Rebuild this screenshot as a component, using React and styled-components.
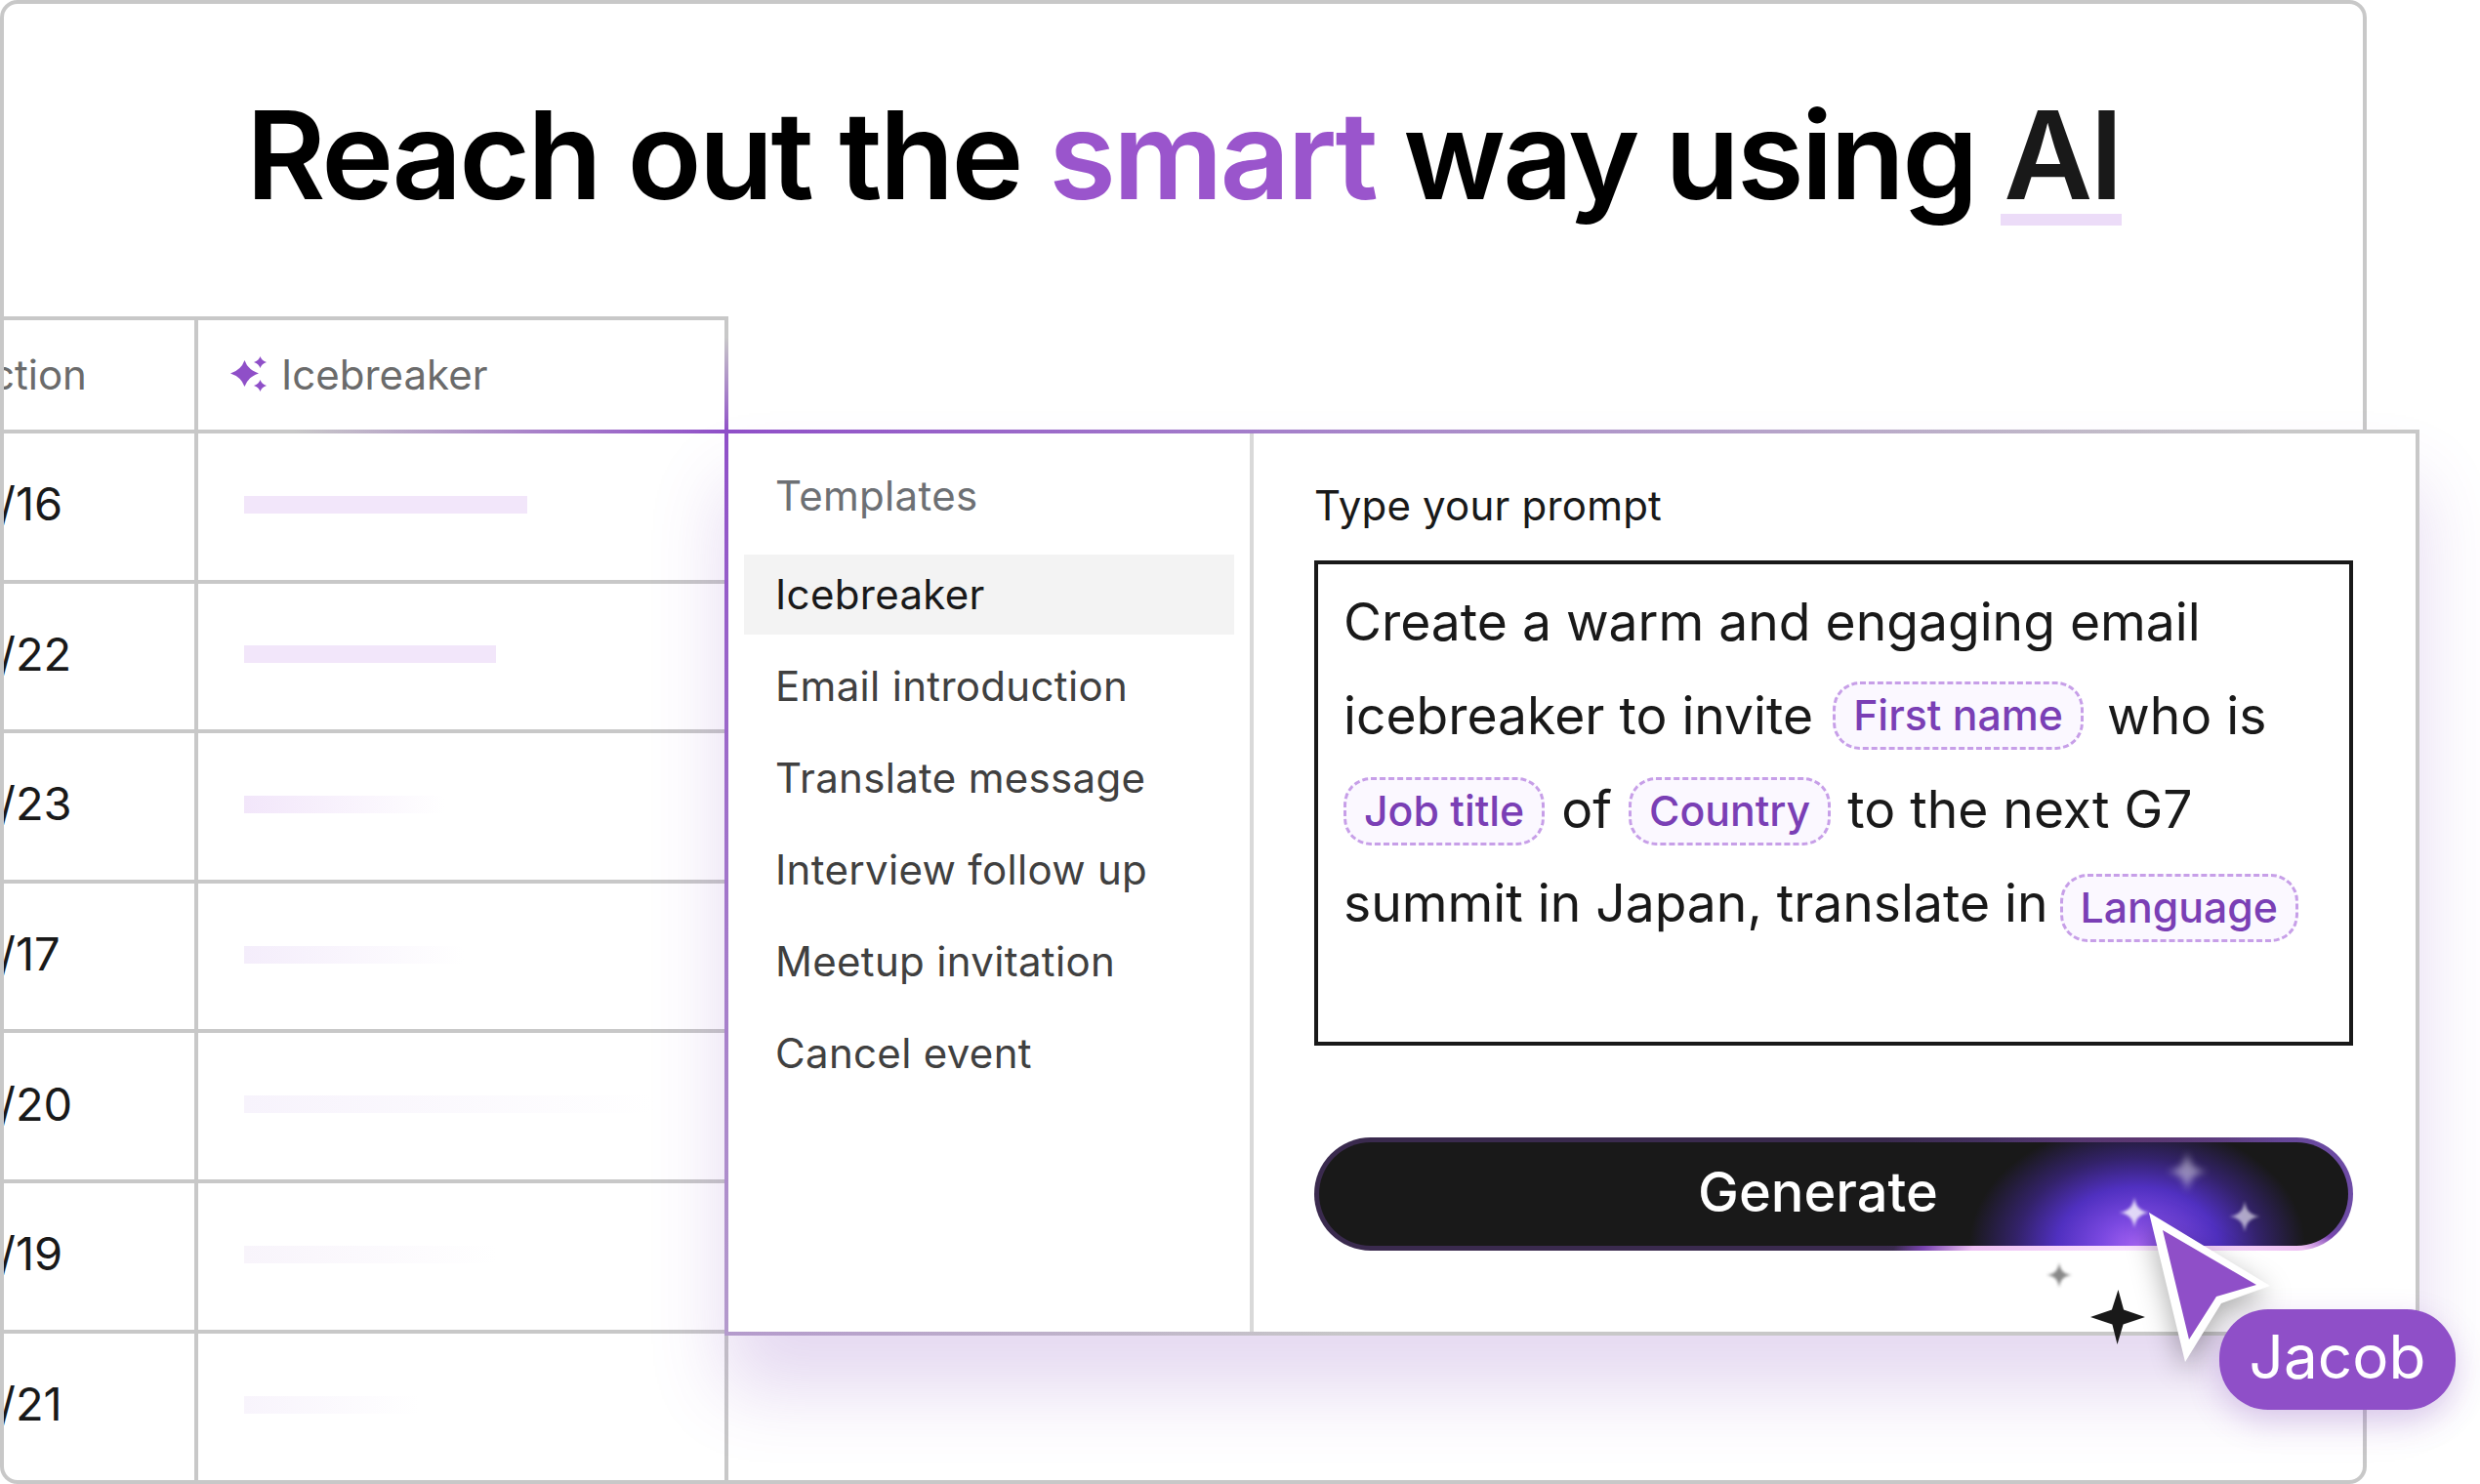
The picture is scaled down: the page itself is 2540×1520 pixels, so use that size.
import { createGlobalStyle, styled } from "styled-components";

const rows = [
  { date: "/16", width: 290, from: "#f2e6fa", to: "#f2e6fa" },
  { date: "/22", width: 258, from: "#f2e6fa", to: "#f2e6fa" },
  { date: "/23", width: 205, from: "#f2e6fa", to: "#ffffff" },
  { date: "/17", width: 225, from: "#f4edfb", to: "#ffffff" },
  { date: "/20", width: 420, from: "#f7f3fc", to: "#ffffff" },
  { date: "/19", width: 260, from: "#f8f4fb", to: "#ffffff" },
  { date: "/21", width: 180, from: "#f8f4fc", to: "#ffffff" },
];

const templates = [
  "Icebreaker",
  "Email introduction",
  "Translate message",
  "Interview follow up",
  "Meetup invitation",
  "Cancel event",
];

const STAR = "M12 0C12.8 7.5 16.5 11.2 24 12C16.5 12.8 12.8 16.5 12 24C11.2 16.5 7.5 12.8 0 12C7.5 11.2 11.2 7.5 12 0Z";

const App = () => {
  return (
    <Page>
      <GlobalStyle />
      <Card>
        <Title>
          Reach out the <Smart>smart</Smart> way using <Marked>AI</Marked>
        </Title>
        <Table>
          <HeadCell>
            <ClippedLabel>ction</ClippedLabel>
          </HeadCell>
          <AiHeadCell>
            <svg width="38" height="38" viewBox="0 0 38 38" fill="#8f4fc8">
              <path d="M14.5 5Q18 15 29 18.5Q18 22 14.5 32Q11 22 0 18.5Q11 15 14.5 5Z" />
              <path d="M30.5 1Q32 5.5 37 7Q32 8.500 30.5 13Q29 8.500 24 7Q29 5.500 30.5 1Z" />
              <path d="M30.500 25Q32 29.500 37 31Q32 32.500 30.500 37Q29 32.500 24 31Q29 29.500 30.500 25Z" />
            </svg>
            Icebreaker
          </AiHeadCell>
          {rows.map((row, i) => (
            <Row key={row.date} $last={i === rows.length - 1}>
              <DateCell>
                <ClippedDate>{row.date}</ClippedDate>
              </DateCell>
              <BarCell>
                <Bar $width={row.width} $from={row.from} $to={row.to} />
              </BarCell>
            </Row>
          ))}
        </Table>
      </Card>

      <PromptPanel>
        <Menu>
          <MenuTitle>Templates</MenuTitle>
          <MenuList>
            {templates.map((name, i) => (
              <MenuItem key={name} $active={i === 0}>
                {name}
              </MenuItem>
            ))}
          </MenuList>
        </Menu>
        <Editor>
          <EditorLabel>Type your prompt</EditorLabel>
          <PromptBox>
            Create a warm and engaging email
            <br />
            icebreaker to invite <Chip $top={13} $left={5} $right={9}>First name</Chip> who is
            <br />
            <Chip $top={15} $left={0} $right={2}>Job title</Chip> of <Chip $top={15} $left={2} $right={2}>Country</Chip> to the next G7
            <br />
            summit in Japan, translate in<Chip $top={18} $left={12} $right={0}>Language</Chip>
          </PromptBox>
          <GenerateButton>Generate</GenerateButton>
        </Editor>
      </PromptPanel>

      <Star $x={2219} $y={1179} $size={42} $blur={3.5} $color="rgba(255,255,255,0.45)" viewBox="0 0 24 24"><path d={STAR} /></Star>
      <Star $x={2170} $y={1226} $size={32} $blur={1.8} $color="rgba(255,255,255,0.8)" viewBox="0 0 24 24"><path d={STAR} /></Star>
      <Star $x={2283} $y={1230} $size={32} $blur={1.8} $color="rgba(255,255,255,0.6)" viewBox="0 0 24 24"><path d={STAR} /></Star>
      <Star $x={2096} $y={1293} $size={26} $blur={1.4} $color="rgba(40,40,40,0.55)" viewBox="0 0 24 24"><path d={STAR} /></Star>
      <Star $x={2141} $y={1321} $size={56} $blur={0} $color="#191919" viewBox="0 0 24 24">
        <path d="M12.2 0L14.6 8.8L24 12L14.4 15.2L11.8 24L9.6 15.2L0 12L9.4 8.8Z" />
      </Star>

      <Pointer viewBox="0 0 140 170" width="140" height="170">
        <path d="M11 12L135 87L85 105L48 165Z" fill="#ffffff" />
        <path d="M25 30L121 86L80 98L52 142Z" fill="#8f4fc8" />
      </Pointer>
      <NameTag>Jacob</NameTag>
    </Page>
  );
};

export default App;

const GlobalStyle = createGlobalStyle`
  * {
    box-sizing: border-box;
  }
  html, body {
    margin: 0;
    padding: 0;
    background: #fff;
  }
  body {
    font-family: "Inter", "Liberation Sans", sans-serif;
  }
`;

const Page = styled.div`
  position: relative;
  width: 2540px;
  height: 1520px;
  overflow: hidden;
  background: #fff;
  color: #191919;
`;

const Card = styled.div`
  display: flex;
  flex-direction: column;
  width: 2424px;
  height: 1520px;
  border: 4px solid #c8c8c8;
  border-radius: 18px;
  overflow: hidden;
`;

const Title = styled.h1`
  margin: 0;
  height: 320px;
  padding-top: 80px;
  font-size: 125px;
  line-height: 150px;
  font-weight: 600;
  letter-spacing: -0.023em;
  text-align: center;
  color: #000;
`;

const Smart = styled.span`
  color: #9a55cc;
`;

const Marked = styled.span`
  position: relative;
  color: #191919;

  &::after {
    content: "";
    position: absolute;
    left: -3px;
    right: -1px;
    top: 136px;
    height: 12px;
    background: #ecdcf8;
  }
`;

const Table = styled.div`
  display: grid;
  grid-template-columns: 199px 543px;
  grid-template-rows: 116px repeat(6, 153.6px) 1fr;
  flex: 1;
  width: 742px;
  border-top: 4px solid #c8c8c8;
  font-size: 42px;
`;

const HeadCell = styled.div`
  display: flex;
  align-items: center;
  overflow: hidden;
  padding-bottom: 2px;
  border-right: 4px solid #c8c8c8;
  border-bottom: 4px solid #c8c8c8;
  color: #6b6b6b;
`;

const AiHeadCell = styled.div`
  display: flex;
  align-items: center;
  gap: 14px;
  padding: 0 0 2px 33px;
  color: #6b6b6b;
  border: solid transparent;
  border-width: 0 4px 4px 0;
  background:
    linear-gradient(#fff, #fff) padding-box,
    linear-gradient(90deg, #c8c8c8 18%, #a77fc9 65%, #8f4fc8 100%) bottom / 100% 4px no-repeat border-box,
    linear-gradient(180deg, #c8c8c8 15%, #8f4fc8 100%) right / 4px 100% no-repeat border-box;
`;

const ClippedLabel = styled.span`
  margin-left: -13px;
`;

const Row = styled.div`
  display: grid;
  grid-column: 1 / -1;
  grid-template-columns: 199px 543px;
  border-bottom: ${(p) => (p.$last ? "none" : "4px solid #c8c8c8")};
`;

const DateCell = styled.div`
  display: flex;
  align-items: center;
  overflow: hidden;
  padding-bottom: 6px;
  border-right: 4px solid #c8c8c8;
  font-size: 47px;
`;

const ClippedDate = styled.span`
  margin-left: -5px;
`;

const BarCell = styled.div`
  display: flex;
  align-items: center;
  padding: 0 0 4px 47px;
  border-right: 4px solid #c8c8c8;
`;

const Bar = styled.div`
  width: ${(p) => p.$width}px;
  height: 18px;
  background: linear-gradient(90deg, ${(p) => p.$from}, ${(p) => p.$to});
`;

const PromptPanel = styled.section`
  position: absolute;
  left: 742px;
  top: 440px;
  display: grid;
  grid-template-columns: 538px 1fr;
  width: 1736px;
  height: 928px;
  border: 4px solid transparent;
  background:
    linear-gradient(#fff, #fff) padding-box,
    linear-gradient(90deg, #8f4fc8 0%, #a47fca 32%, #c8c8c8 92%) top / 100% 4px no-repeat border-box,
    linear-gradient(90deg, #b49acc 0%, #c8c8c8 38%) bottom / 100% 4px no-repeat border-box,
    linear-gradient(180deg, #8f4fc8 0%, #b49acc 100%) left / 4px 100% no-repeat border-box,
    linear-gradient(#c8c8c8, #c8c8c8) right / 4px 100% no-repeat border-box;
  box-shadow: 0 56px 72px rgba(125, 65, 185, 0.2);
`;

const Menu = styled.nav`
  display: flex;
  flex-direction: column;
  padding: 40px 16px 0;
  border-right: 4px solid #d9d9d9;
  font-size: 42px;
  letter-spacing: 0.32px;
`;

const MenuTitle = styled.div`
  height: 48px;
  margin-bottom: 36px;
  padding-left: 32px;
  line-height: 48px;
  color: #6d7074;
`;

const MenuList = styled.div`
  display: flex;
  flex-direction: column;
  gap: 12px;
`;

const MenuItem = styled.div`
  display: flex;
  align-items: center;
  height: 82px;
  padding: 0 0 1px 32px;
  background: ${(p) => (p.$active ? "#f3f3f3" : "transparent")};
  color: ${(p) => (p.$active ? "#191919" : "#404040")};
`;

const Editor = styled.div`
  display: flex;
  flex-direction: column;
  padding: 49px 64px 0 62px;
`;

const EditorLabel = styled.div`
  height: 50px;
  margin-bottom: 31px;
  font-size: 42px;
  line-height: 50px;
  letter-spacing: 0.2px;
  color: #191919;
`;

const PromptBox = styled.div`
  height: 497px;
  padding: 11px 0 0 26px;
  border: 4px solid #191919;
  font-size: 53.4px;
  line-height: 96px;
  white-space: nowrap;
  color: #191919;
`;

const Chip = styled.span`
  display: inline-block;
  height: 70px;
  margin: ${(p) => p.$top}px ${(p) => p.$right}px 0 ${(p) => p.$left}px;
  padding: 0 18px;
  border: 3px dashed #c79fe8;
  border-radius: 28px;
  background: #fbf8ff;
  font-size: 42.8px;
  line-height: 63px;
  font-weight: 500;
  vertical-align: top;
  color: #7a3fb5;
`;

const GenerateButton = styled.button`
  display: block;
  height: 116px;
  margin-top: 94px;
  padding: 0 32px 4px 0;
  border: 5px solid transparent;
  border-radius: 58px;
  font-family: inherit;
  font-size: 56px;
  font-weight: 500;
  color: #fff;
  background:
    radial-gradient(ellipse 172px 126px at 838px 106px, #a462f2 0%, #7a48e0 22%, #5030c0 48%, rgba(62, 38, 140, 0.7) 72%, rgba(25, 25, 25, 0) 100%) padding-box,
    linear-gradient(#191919, #191919) padding-box,
    radial-gradient(ellipse 250px 36px at 843px 116px, #fbe6ff 0%, #efc0f4 68%, rgba(125, 70, 180, 0.95) 88%, rgba(90, 60, 130, 0) 100%) border-box,
    radial-gradient(ellipse 150px 30px at 843px 0, #5c3670 0%, rgba(92, 54, 112, 0) 100%) border-box,
    linear-gradient(90deg, #3a2a4e 0%, #3a2a4e 55%, #6e4ca6 100%) border-box;
`;

const Star = styled.svg`
  position: absolute;
  left: ${(p) => p.$x}px;
  top: ${(p) => p.$y}px;
  width: ${(p) => p.$size}px;
  height: ${(p) => p.$size}px;
  fill: ${(p) => p.$color};
  filter: blur(${(p) => p.$blur}px);
`;

const Pointer = styled.svg`
  position: absolute;
  left: 2190px;
  top: 1230px;
  filter: drop-shadow(0 10px 14px rgba(0, 0, 0, 0.32));
`;

const NameTag = styled.div`
  position: absolute;
  left: 2273px;
  top: 1341px;
  display: flex;
  align-items: center;
  justify-content: center;
  width: 242px;
  height: 103px;
  padding-bottom: 6px;
  border-radius: 50px;
  background: #8f4fc8;
  box-shadow: 0 12px 32px rgba(125, 65, 185, 0.25);
  font-size: 62px;
  color: #fff;
`;
